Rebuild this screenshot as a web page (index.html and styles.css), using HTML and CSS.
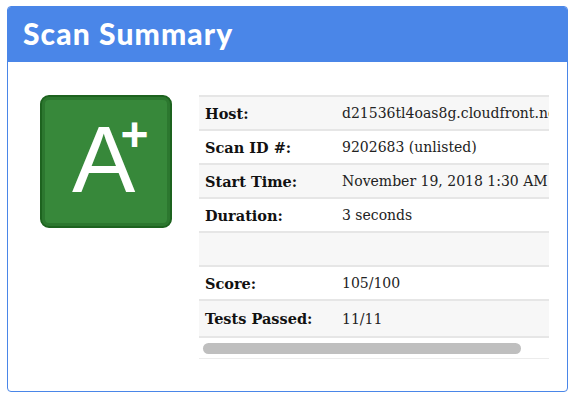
FILE: index.html
```html
<!DOCTYPE html>
<html>
<head>
<meta charset="utf-8">
<link rel="stylesheet" href="styles.css">
</head>
<body>
<div class="card">
  <div class="card-header"><h1 class="title">Scan Summary</h1></div>
  <div class="card-body">
    <div class="grade"><span class="grade-letter">A</span><span class="grade-mod">+</span></div>
    <div class="table-wrap">
      <table class="summary">
        <tr class="odd"><th>Host:</th><td>d21536tl4oas8g.cloudfront.net</td></tr>
        <tr><th>Scan ID #:</th><td>9202683 (unlisted)</td></tr>
        <tr class="odd"><th>Start Time:</th><td>November 19, 2018 1:30 AM</td></tr>
        <tr><th>Duration:</th><td>3 seconds</td></tr>
        <tr class="odd"><th></th><td></td></tr>
        <tr><th>Score:</th><td>105/100</td></tr>
        <tr class="odd last"><th>Tests Passed:</th><td>11/11</td></tr>
      </table>
      <div class="scroll-track"><div class="scroll-thumb"></div></div>
    </div>
  </div>
</div>
</body>
</html>
```
FILE: styles.css
```css
html, body { margin: 0; padding: 0; background: #fff; }
body { padding: 6px 8px 8px 7px; }
.card {
  border: 1px solid #4a86e8;
  border-radius: 4px;
  height: 384px;
  overflow: hidden;
}
.card-header {
  background: #4a86e8;
  height: 55px;
  display: flex;
  align-items: center;
  padding-left: 15px;
}
.title {
  margin: 0;
  color: #fff;
  font-family: Lato, "Open Sans", sans-serif;
  font-weight: 900;
  font-size: 30px;
  letter-spacing: 1.1px;
  padding-bottom: 3px;
}
.card-body {
  display: flex;
  align-items: flex-start;
  padding: 33px 0 0 32px;
  gap: 27px;
}
.grade {
  width: 132px;
  height: 133px;
  flex: none;
  box-sizing: border-box;
  background: #37883a;
  border: 2px solid #1d631f;
  box-shadow: inset 0 0 0 3px #2c772f;
  border-radius: 9px;
  color: #fff;
  font-family: "Liberation Sans", Arial, sans-serif;
  display: flex;
  justify-content: flex-start;
  align-items: flex-start;
  padding-left: 30px;
}
.grade-letter {
  font-size: 95px;
  line-height: 1;
  margin-top: 15px;
}
.grade-mod {
  font-size: 48px;
  font-weight: bold;
  line-height: 1;
  margin-top: 14px;
  margin-left: -15px;
}
.table-wrap {
  width: 350px;
  overflow: hidden;
}
.summary {
  border-collapse: collapse;
  width: 440px;
  font-family: "DejaVu Serif", Georgia, serif;
  font-size: 14px;
  color: #222;
  white-space: nowrap;
}
.summary tr { height: 34px; border-top: 2px solid #e6e6e6; }
.summary tr.last { height: 36px; }
.summary tr.odd { background: #f7f7f7; }
.summary th {
  text-align: left;
  width: 125px;
  padding: 0 6px;
  font-size: 14.5px;
  font-weight: bold;
  color: #111;
}
.summary td { padding: 0 6px; }
.scroll-track {
  height: 20px;
  border-top: 2px solid #e6e6e6;
  border-bottom: 1px solid #ececec;
  display: flex;
  align-items: center;
  padding-left: 4px;
}
.scroll-thumb {
  width: 318px;
  height: 11px;
  border-radius: 6px;
  background: #bfbfbf;
}
```
